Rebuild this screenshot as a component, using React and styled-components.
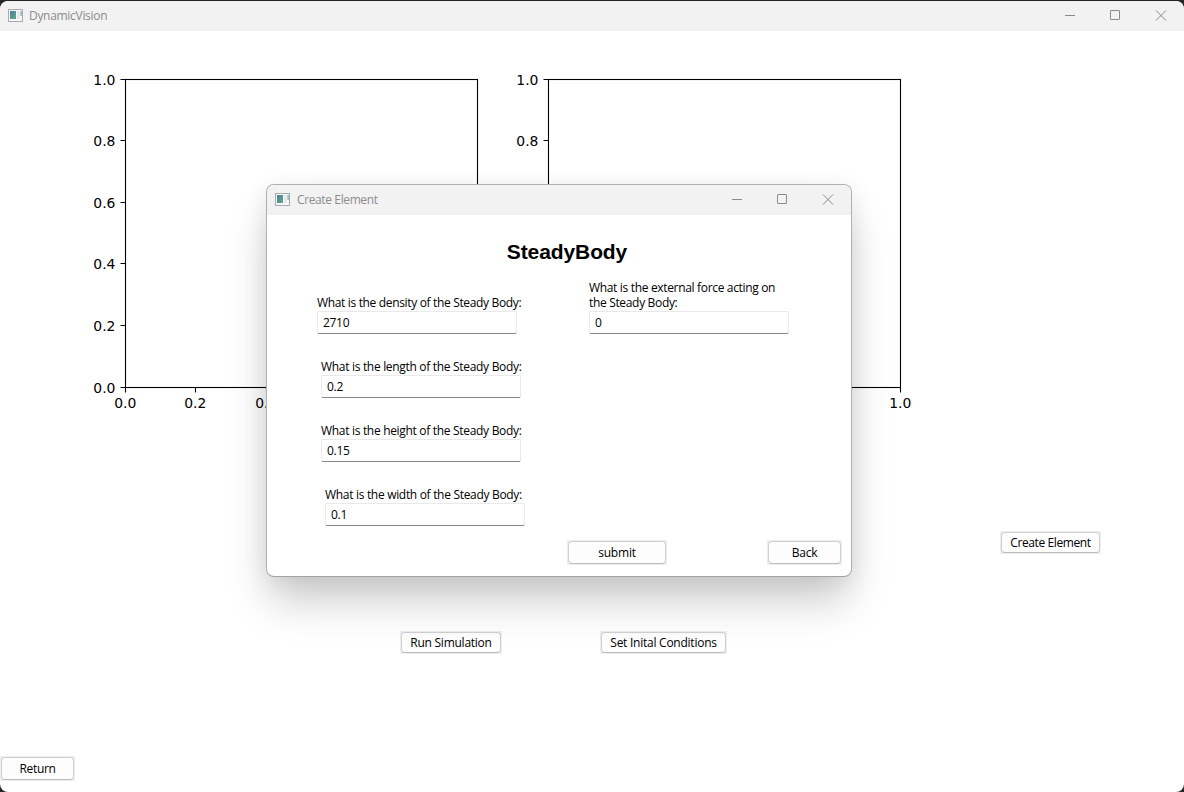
import React from "react";
import styled, { createGlobalStyle } from "styled-components";

const GlobalStyle = createGlobalStyle`
  * { box-sizing: border-box; }
  body {
    margin: 0;
    background: #25242b;
    font-family: "Open Sans", "Noto Sans", sans-serif;
    font-size: 12px;
    color: #000;
  }
`;

const Desktop = styled.div`
  position: relative;
  width: 1184px;
  height: 792px;
  padding-top: 1px;
  overflow: hidden;
  background: #25242b;
`;

const MainWindow = styled.div`
  display: flex;
  flex-direction: column;
  height: 791px;
  border-radius: 8px;
  overflow: hidden;
  background: #fff;
`;

const Dialog = styled.div`
  position: absolute;
  left: 266px;
  top: 184px;
  display: flex;
  flex-direction: column;
  width: 586px;
  height: 393px;
  border: 1px solid #b0b0b0;
  border-bottom-color: #a3a3a3;
  border-radius: 8px;
  background: #fff;
  background-clip: padding-box;
  box-shadow: 0 28px 44px -4px rgba(0, 0, 0, 0.2), 0 4px 24px rgba(0, 0, 0, 0.08);
`;

const Bar = styled.div`
  display: flex;
  flex: none;
  align-items: center;
  height: 30px;
  padding: 0 0 0 8px;
  border-radius: 7px 7px 0 0;
  background: #f2f2f2;
`;

const BarTitle = styled.span`
  flex: 1;
  margin-left: ${(p) => p.$gap || 6}px;
  line-height: 16px;
  letter-spacing: ${(p) => p.$tracking || 0}px;
  white-space: nowrap;
  color: #8c8c8c;
`;

const Controls = styled.svg`
  flex: none;
  width: 138px;
  height: 30px;
`;

const WindowIcon = styled.svg`
  flex: none;
  width: 15px;
  height: 13px;
  margin-bottom: 2px;
`;

const ActionButton = styled.button`
  flex: none;
  width: ${(p) => p.$width}px;
  height: ${(p) => p.$height || 23}px;
  padding: 1px;
  border: 0;
  background: #eee;
  font: inherit;
  color: #000;
`;

const ButtonFace = styled.span`
  display: flex;
  align-items: center;
  justify-content: center;
  height: 100%;
  border: 1px solid #d0d0d0;
  border-bottom-color: #bcbcbc;
  border-radius: 4px;
  background: #fdfdfd;
  line-height: 16px;
  letter-spacing: ${(p) => p.$tracking || 0}px;
  white-space: nowrap;
`;

const Charts = styled.div`
  display: flex;
  gap: 3px;
  padding: 34px 0 0 80px;
`;

const ChartSvg = styled.svg`
  display: block;
  width: 420px;
  height: 350px;
  font-family: "DejaVu Sans", sans-serif;
  font-size: 13.9px;
`;

const CreateRow = styled.div`
  display: flex;
  justify-content: flex-end;
  padding: 116px 83px 0 0;
`;

const RunRow = styled.div`
  display: flex;
  gap: 98px;
  padding: 77px 0 0 400px;
`;

const ReturnRow = styled.div`
  display: flex;
  margin-top: auto;
  padding-bottom: 11px;
`;

const Heading = styled.h1`
  margin: 24px 0 0;
  padding-left: 16px;
  font: bold 21px/26px "Liberation Sans", Arial, sans-serif;
  letter-spacing: -0.1px;
  text-align: center;
`;

const Form = styled.div`
  display: flex;
  height: 255px;
  padding: 30px 0 0 50px;
`;

const Column = styled.div`
  display: flex;
  flex: none;
  flex-direction: column;
  gap: 25px;
  width: ${(p) => p.$width}px;
  margin-top: ${(p) => p.$lift || 0}px;
`;

const Field = styled.label`
  display: flex;
  flex: none;
  flex-direction: column;
  margin-left: ${(p) => p.$indent || 0}px;
`;

const Caption = styled.span`
  line-height: 15px;
  letter-spacing: ${(p) => p.$tracking || 0}px;
  white-space: pre;
`;

const Input = styled.input`
  width: 200px;
  height: 23px;
  margin-top: 1px;
  padding: 0 5px 1px;
  border: 1px solid #e9e9e9;
  border-bottom-color: #858585;
  border-radius: 2px;
  outline: 0;
  background: #fff;
  font: inherit;
  letter-spacing: ${(p) => p.$tracking || 0}px;
  color: #000;
`;

const Footer = styled.div`
  display: flex;
  justify-content: flex-end;
  gap: 100px;
  padding: 20px 9px 0 0;
`;

function AppIcon() {
  return (
    <WindowIcon viewBox="0 0 15 13">
      <defs>
        <linearGradient id="pane" x1="0" y1="0" x2="1" y2="1">
          <stop offset="0" stopColor="#507da0" />
          <stop offset="1" stopColor="#5fab84" />
        </linearGradient>
      </defs>
      <rect x="0.5" y="0.5" width="14" height="12" fill="#f7f7f7" stroke="#a7aaaf" />
      <rect x="2" y="2" width="6" height="8" fill="url(#pane)" />
      <rect x="9" y="2" width="3" height="8" fill="#e9e9eb" />
      <rect x="12.6" y="2" width="1" height="5" fill="#5b9b97" />
    </WindowIcon>
  );
}

function TitleBar({ title, tracking, gap }) {
  return (
    <Bar>
      <AppIcon />
      <BarTitle $tracking={tracking} $gap={gap}>{title}</BarTitle>
      <Controls viewBox="0 0 138 30" fill="none" stroke="#8a8a8a">
        <path d="M19 14.5H29" />
        <rect x="64.5" y="9.5" width="9" height="9" rx="0.5" />
        <path d="M110 9.5L120 19.5M120 9.5L110 19.5" />
      </Controls>
    </Bar>
  );
}

function Action({ width, height, tracking, children }) {
  return (
    <ActionButton $width={width} $height={height}>
      <ButtonFace $tracking={tracking}>{children}</ButtonFace>
    </ActionButton>
  );
}

const TICKS = [0, 0.2, 0.4, 0.6, 0.8, 1];

function Axes() {
  return (
    <ChartSvg viewBox="0 0 420 350">
      <rect x="45.5" y="14.5" width="352" height="308" fill="none" stroke="#000" strokeWidth="1.1" />
      {TICKS.map((t) => {
        const x = Math.round(45 + t * 352) + 0.5;
        const y = Math.floor(322 - t * 308) + 0.5;
        return (
          <g key={t}>
            <path d={`M${x} 322V327.5M40.5 ${y}H45`} stroke="#000" strokeWidth="1.1" />
            <text x={x - 0.3} y="343" textAnchor="middle">{t.toFixed(1)}</text>
            <text x="35.4" y={y + 5} textAnchor="end">{t.toFixed(1)}</text>
          </g>
        );
      })}
    </ChartSvg>
  );
}

function Question({ lines, value, indent, tracking = -0.31 }) {
  return (
    <Field $indent={indent}>
      {lines.map((line) => (
        <Caption key={line} $tracking={tracking}>{line}</Caption>
      ))}
      <Input defaultValue={value} $tracking={-0.3} />
    </Field>
  );
}

export default function App() {
  return (
    <>
      <GlobalStyle />
      <Desktop>
        <MainWindow>
          <TitleBar title="DynamicVision" tracking={-0.3} />
          <Charts>
            <Axes />
            <Axes />
          </Charts>
          <CreateRow>
            <Action width={101} tracking={-0.4}>Create Element</Action>
          </CreateRow>
          <RunRow>
            <Action width={102} tracking={-0.25}>Run Simulation</Action>
            <Action width={127} tracking={-0.25}>Set Inital Conditions</Action>
          </RunRow>
          <ReturnRow>
            <Action width={75} height={25} tracking={-0.3}>Return</Action>
          </ReturnRow>
        </MainWindow>
        <Dialog>
          <TitleBar title="Create Element" tracking={-0.38} gap={7} />
          <Heading>SteadyBody</Heading>
          <Form>
            <Column $width={272}>
              <Question lines={["What is the density of the Steady Body:"]} value="2710" tracking={-0.34} />
              <Question lines={["What is the length of the Steady Body:"]} value="0.2" indent={4} />
              <Question lines={["What is the height of the Steady Body:"]} value="0.15" indent={4} />
              <Question lines={["What is the width of the Steady Body:"]} value="0.1" indent={8} />
            </Column>
            <Column $width={200} $lift={-15}>
              <Question lines={["What is the external force acting on", "the Steady Body:"]} value="0" tracking={-0.33} />
            </Column>
          </Form>
          <Footer>
            <Action width={100} height={25} tracking={-0.2}>submit</Action>
            <Action width={75} height={25} tracking={-0.2}>Back</Action>
          </Footer>
        </Dialog>
      </Desktop>
    </>
  );
}
